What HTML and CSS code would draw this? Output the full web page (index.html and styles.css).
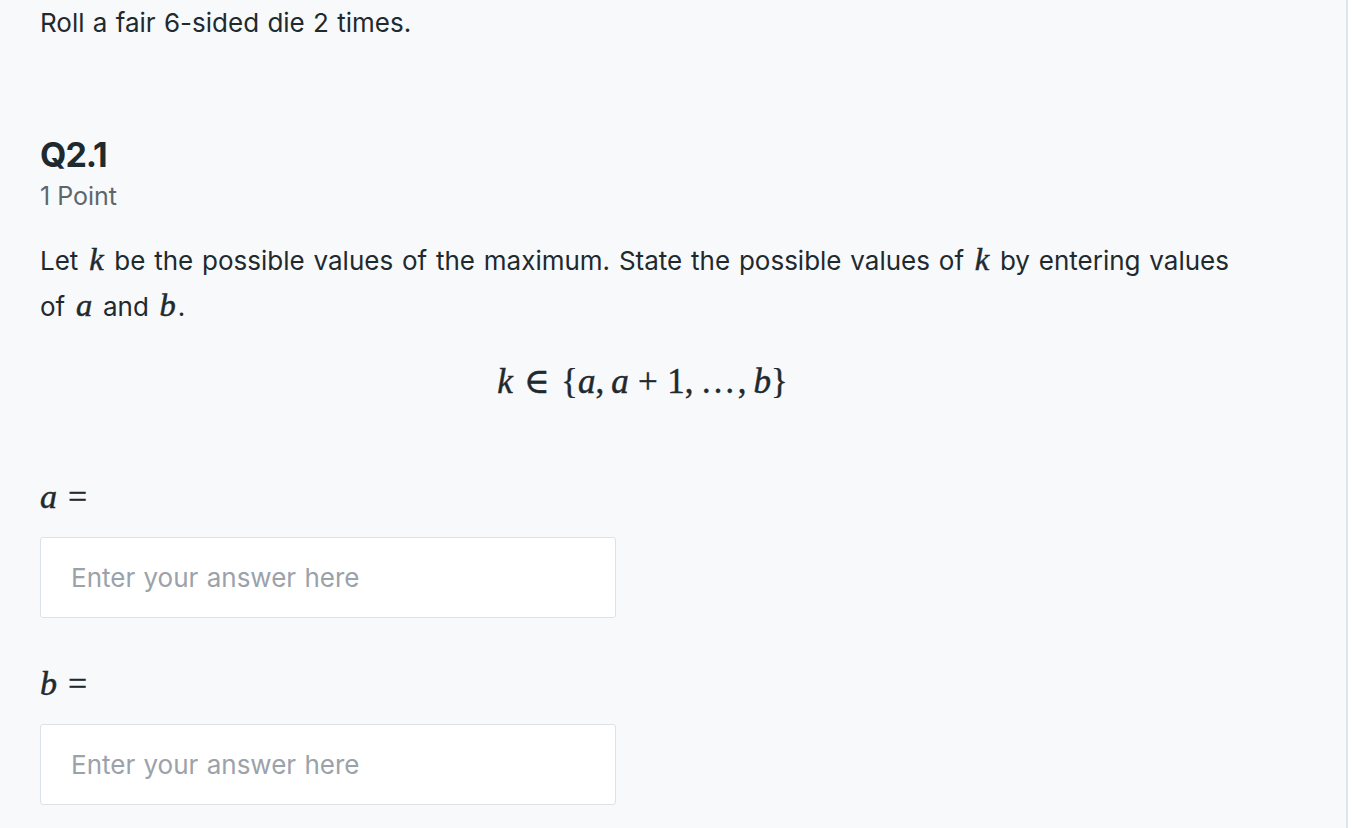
FILE: index.html
```html
<!DOCTYPE html>
<html>
<head>
<meta charset="utf-8">
<link rel="stylesheet" href="styles.css">
</head>
<body>
<div class="page">
  <main class="main">
    <p class="intro">Roll a fair 6-sided die 2 times.</p>
    <h2 class="qtitle">Q2.1</h2>
    <div class="points">1 Point</div>
    <p class="prompt">Let <span class="mi">k</span> be the possible values of the maximum. State the possible values of <span class="mi">k</span> by entering values of <span class="mi">a</span> and <span class="mi">b</span>.</p>
    <div class="equation"><span class="mi">k</span><span class="mrel">∈</span><span class="mo">{</span><span class="mi">a</span><span class="mp">,</span><span class="mi">a</span><span class="mbin">+</span><span class="mn">1</span><span class="mp">,</span><span class="mn dots">…</span><span class="mp">,</span><span class="mi">b</span><span class="mo">}</span></div>
    <div class="label"><span class="mi">a</span><span class="mrel">=</span></div>
    <input class="answer" type="text" placeholder="Enter your answer here">
    <div class="label label-b"><span class="mi">b</span><span class="mrel">=</span></div>
    <input class="answer" type="text" placeholder="Enter your answer here">
  </main>
  <div class="side"></div>
</div>
</body>
</html>
```
FILE: styles.css
```css
html, body {
  margin: 0;
  padding: 0;
  background: #ffffff;
}
body {
  font-family: Inter, Lato, sans-serif;
  color: #1f2a2e;
}
.page {
  display: flex;
  height: 828px;
  overflow: hidden;
}
.main {
  box-sizing: border-box;
  width: 1348px;
  flex: none;
  background: #f8f9fb;
  border-right: 2px solid #e1e5ea;
  padding: 3px 101px 0 40px;
  display: flex;
  flex-direction: column;
  align-items: flex-start;
}
.side {
  flex: 1;
  background: #fff;
}
.intro {
  margin: 0;
  font-size: 26px;
  line-height: 39px;
  word-spacing: 1px;
}
.qtitle {
  margin: 92px 0 0;
  font-size: 34px;
  font-weight: 700;
  line-height: 41px;
  letter-spacing: -1px;
}
.points {
  margin-top: 3px;
  font-size: 25px;
  line-height: 36px;
  color: #5c676c;
}
.prompt {
  margin: 24px 0 0;
  font-size: 26px;
  line-height: 46px;
  max-width: 1195px;
  word-spacing: 1.5px;
}
.mi {
  font-family: "Liberation Serif", "DejaVu Serif", serif;
  font-style: italic;
  font-size: 1.25em;
  line-height: 1;
  -webkit-text-stroke: 0.5px #1f2a2e;
}
.prompt .mi {
  display: inline-block;
  margin: 0 0.06em;
}
.equation {
  align-self: stretch;
  margin-top: 29px;
  text-align: center;
  font-family: "Liberation Serif", "DejaVu Serif", serif;
  font-size: 35px;
  line-height: 46px;
  -webkit-text-stroke: 0.4px #1f2a2e;
}
.equation .mi, .label .mi {
  font-size: 1em;
}
.mrel {
  margin: 0 0.32em;
  font-style: normal;
}
.mbin {
  margin: 0 0.27em;
}
.mp {
  margin-right: 0.2em;
}
.dots {
  letter-spacing: 0.06em;
}
.label {
  margin-top: 69px;
  font-family: "Liberation Serif", "DejaVu Serif", serif;
  font-size: 34px;
  line-height: 46px;
  -webkit-text-stroke: 0.3px #1f2a2e;
}
.label-b {
  margin-top: 43px;
}
.answer {
  box-sizing: border-box;
  margin-top: 17px;
  width: 576px;
  height: 81px;
  padding: 0 0 0 30px;
  border: 1px solid #dde2e8;
  border-radius: 3px;
  background: #fff;
  font-family: Inter, Lato, sans-serif;
  font-size: 26px;
  word-spacing: 1px;
  color: #1f2a2e;
  outline: none;
}
.answer::placeholder {
  color: #9ba2aa;
}
```
